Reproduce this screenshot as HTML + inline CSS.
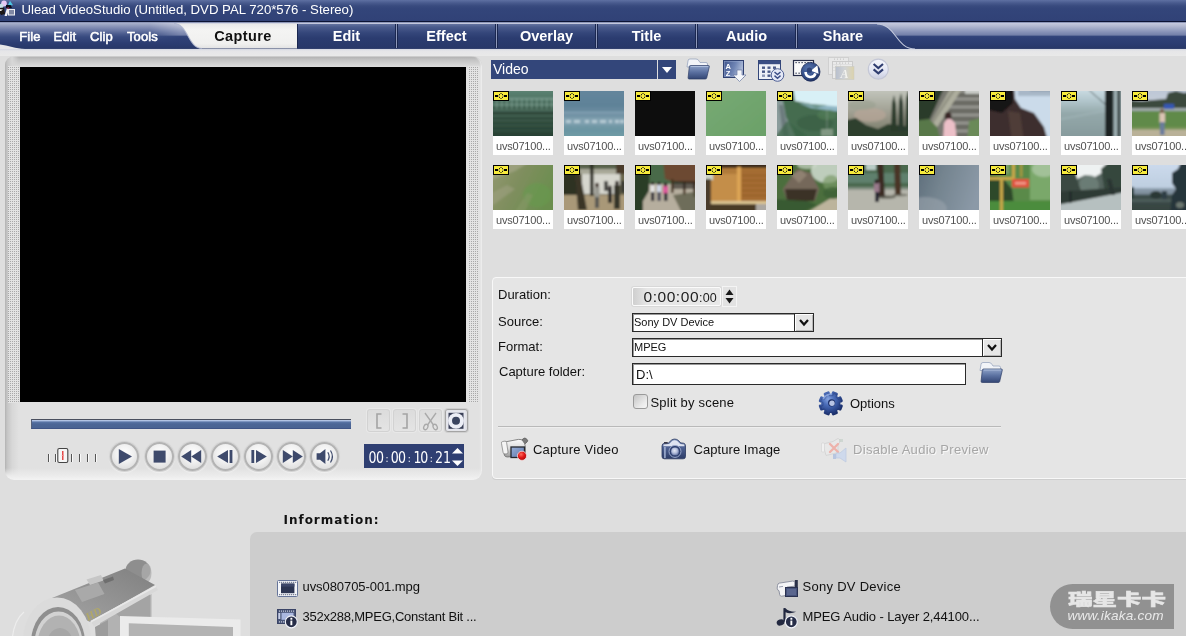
<!DOCTYPE html>
<html>
<head>
<meta charset="utf-8">
<title>Ulead VideoStudio</title>
<style>
html,body{margin:0;padding:0;}
body{width:1186px;height:636px;overflow:hidden;background:#dedede;font-family:"Liberation Sans",sans-serif;font-size:13px;color:#111;position:relative;}
.abs{position:absolute;}
#titlebar{left:0;top:0;width:1186px;height:21px;background:linear-gradient(#5e70a2 0px,#485a8d 3px,#384a7e 6px,#33457a 9px,#314277 20px);}
#titlebar .t{left:21.5px;top:2px;color:#fff;font-size:13.2px;line-height:16px;white-space:nowrap;}
#tline1{left:0;top:21px;width:1186px;height:1px;background:#0d1434;}
#tline2{left:0;top:22px;width:1186px;height:1px;background:#8e97b8;}
#menubar{left:0;top:23px;width:1186px;height:26px;background:linear-gradient(#c6cade 0px,#b3b9d1 3px,#9da6c4 6px,#8792b7 9px,#7783ab 11.5px,#5c6b98 12.5px,#33457b 13.5px,#2f4177 15px,#2b3c71 21px,#283869 25px,#3c4974 26px);}
.menu{top:28.6px;color:#fff;font-size:13px;line-height:16px;white-space:nowrap;-webkit-text-stroke:.55px #fff;letter-spacing:.1px;}
.tab{top:24px;height:24px;width:99px;box-sizing:border-box;border-left:1px solid #1a2750;border-right:1px solid #1a2750;background:linear-gradient(#6473a0 0px,#4a5b8c 3px,#34467a 9px,#2b3c70 14px,#283869 24px);color:#fff;font-weight:bold;font-size:14.5px;line-height:24px;text-align:center;}
.tabsep{top:24px;width:1px;height:24px;background:#8d97ba;}

#band{left:0;top:49px;width:1186px;height:7px;background:linear-gradient(#d4d7e2 0,#e6e6e8 2px,#e9e9e9 7px);}
#pv{left:5px;top:56px;width:476.6px;height:424px;box-sizing:border-box;border-radius:9px 10px 9px 9px;background:linear-gradient(0deg,#f3f3f3 0,#ececec 4px,rgba(225,225,225,0) 12px),linear-gradient(90deg,#b2b2b2 0,#c4c4c4 2px,#d7d7d7 7px,rgba(225,225,225,0) 14px),linear-gradient(#d4d4d4 0,#b6b6b6 1.5px,#c4c4c4 4px,#d6d6d6 9px,#e0e0e0 12px,#e1e1e1 13px,#e1e1e1 100%);box-shadow:inset -2px 0 2px -1px #f0f0f0;}
.dots{top:66px;width:11px;height:337px;background-color:#e3e3e3;background-image:radial-gradient(circle at 0.5px 0.5px,#a8a8a8 0.55px,rgba(168,168,168,0) 0.9px);background-size:2px 2px;}
#video{left:20px;top:67px;width:446px;height:335px;background:#000;}
#scrub{left:31px;top:419px;width:320px;height:10px;box-sizing:border-box;border-top:1px solid #4a4f5e;border-bottom:1px solid #3f5485;border-left:1px solid #55607a;background:linear-gradient(#c5d3ee 0,#9fb3d8 1px,#5a75a6 2px,#4c6696 4px,#4a6392 8px);}
.pbtn{top:409px;width:23px;height:23px;box-sizing:border-box;border-radius:3px;border:1px solid #d2d2d2;background:linear-gradient(#dcdcdc,#e4e4e4);box-shadow:0 0 0 1px #e8e8e8;}
.rbtn{top:442px;width:29px;height:29px;box-sizing:border-box;border-radius:50%;border:2px solid #b3b3b3;background:radial-gradient(circle at 50% 38%,#ffffff 0,#f0f0f0 45%,#d4d4d4 100%);box-shadow:0 0 1px 1px #cfcfcf,0 1px 1px 1px #f4f4f4;}
#tc{left:364px;top:444px;width:100px;height:24px;background:#2f3f72;}
#all{position:absolute;left:0;top:0;width:1186px;height:636px;overflow:hidden;will-change:transform;}
.th{width:60px;height:64px;background:#fff;}
.th svg{display:block;}
.tl{font-size:11px;line-height:15px;color:#505050;padding:3px 0 0 3px;white-space:nowrap;letter-spacing:-.2px;}
#lib{left:491px;top:60px;width:166px;height:19px;background:#33467a;color:#fff;font-size:14px;line-height:19px;}
#libbtn{left:658px;top:60px;width:18px;height:19px;background:#33467a;}
#opt{left:492px;top:277px;width:720px;height:202px;box-sizing:border-box;border:1.5px solid #f8f8f8;border-radius:4px;background:#e5e5e5;box-shadow:0 1px 0 #cecece;}
.lbl{font-size:13px;line-height:15px;white-space:nowrap;color:#111;}
.combo{box-sizing:border-box;border:1px solid #2a2a2a;background:#fff;height:19px;font-size:11px;line-height:17px;padding-left:1px;white-space:nowrap;box-shadow:inset 1px 1px 0 #999;}
.cbtn{box-sizing:border-box;border:1px solid #2a2a2a;border-left:none;background:#e6e6e6;height:19px;width:19px;box-shadow:inset 1px 1px 0 #fff,inset -1px -1px 0 #b8b8b8;}
#dur{left:632px;top:287px;width:89px;height:19px;box-sizing:border-box;border-radius:2px;border:1px solid #fbfbfb;background:linear-gradient(90deg,#cfcfcf 0,#e6e6e6 14px,#e8e8e8 100%);box-shadow:0 0 0 1px #d8d8d8;font-family:"Liberation Sans",sans-serif;font-size:15.5px;line-height:18px;color:#222;white-space:nowrap;}
#infop{left:250px;top:532px;width:950px;height:120px;background:#cdcdcd;border-radius:7px 0 0 0;}
#infot{left:283.6px;top:512.2px;font-family:"DejaVu Sans",sans-serif;font-weight:bold;font-size:12px;line-height:16px;letter-spacing:.95px;color:#111;white-space:nowrap;}
.it{font-size:12.5px;line-height:15px;white-space:nowrap;color:#111;}
#wm{left:1050px;top:584px;width:124px;height:45px;background:#919191;border-radius:23px 0 0 23px;}
#tctxt{left:368.5px;top:449px;height:16px;white-space:nowrap;font-family:"DejaVu Sans",sans-serif;font-weight:400;font-size:12.6px;line-height:16px;color:#fff;transform-origin:0 0;transform:scaleY(1.2);}
#tctxt span{display:inline-block;width:7.4px;text-align:center;}
#tctxt span.r{position:relative;left:.6px;}
#tctxt span.c{font-size:9px;position:relative;top:-1.2px;}
</style>
</head>
<body>
<div id="all">
<div id="titlebar" class="abs"><div class="abs t">Ulead VideoStudio (Untitled, DVD PAL 720*576 - Stereo)</div></div>
<svg class="abs" style="left:0;top:0" width="17" height="18" viewBox="0 0 17 18"><defs><filter id="ib"><feGaussianBlur stdDeviation="0.45"/></filter></defs><g filter="url(#ib)">
<ellipse cx="4" cy="3.6" rx="2.800" ry="3" fill="#e6c8f4"/><ellipse cx="1.500" cy="6" rx="2" ry="2.500" fill="#c8e0e8"/>
<polygon points="8,5 10,0.800 13,5.200" fill="#4cc4e4"/>
<polygon points="6,5 10.500,5 12,8 6,8" fill="#0c0c14"/>
<polygon points="-1,8 4,7.500 5,14 1,15 -1,12" fill="#1a1414"/><polygon points="-1,9 3,9.500 1,11 -1,11" fill="#e8e8e8"/>
<polygon points="4.500,16 7,8 9,9 7,16" fill="#f4f0f4"/><polygon points="6,8 9,7 9.500,10" fill="#7a2a4a"/>
<rect x="8.500" y="9.500" width="6" height="5.500" fill="#8088a4" stroke="#f0f0f4" stroke-width="1"/>
</g></svg>
<div id="tline1" class="abs"></div>
<div id="tline2" class="abs"></div>
<div id="menubar" class="abs"></div>
<div class="abs" style="left:0;top:23px;width:180px;height:26px;background:linear-gradient(#aab2cc 0px,#8e98ba 3px,#6c7aa6 7px,#4a5b8d 11px,#384a7f 14px,#2c3d72 20px,#283869 25px,#3c4974 26px);-webkit-mask-image:linear-gradient(90deg,#000 150px,transparent 180px)"></div>
<div class="abs menu" style="left:19.2px">File</div>
<div class="abs menu" style="left:53.4px">Edit</div>
<div class="abs menu" style="left:90px">Clip</div>
<div class="abs menu" style="left:127px">Tools</div>
<svg class="abs" style="left:0;top:43px" width="26" height="7" viewBox="0 43 26 7"><path d="M0,44.600 C8,45.500 16,48.800 25,49 L0,49 Z" fill="#e6e6e8"/></svg>
<svg class="abs" style="left:160px;top:23px" width="140" height="27" viewBox="160 23 140 27">
<defs><linearGradient id="capg" x1="0" y1="0" x2="0" y2="1"><stop offset="0" stop-color="#e8e8e8"/><stop offset="0.25" stop-color="#f4f4f3"/><stop offset="0.8" stop-color="#f0f0ef"/><stop offset="1" stop-color="#e2e2e2"/></linearGradient></defs>
<path d="M174,23.5 C188,23.5 188,48.6 202,48.6 L297,48.6 L297,23.5 Z" fill="url(#capg)"/>
<path d="M174,23.5 C188,23.5 188,48.6 202,48.6" fill="none" stroke="#aab2cc" stroke-width="1.2" opacity=".8"/>
</svg>
<div class="abs" style="left:200px;top:24px;width:86px;height:24px;line-height:24px;text-align:center;font-weight:bold;font-size:14.5px;color:#111;letter-spacing:.4px">Capture</div>
<div class="abs tab" style="left:297px">Edit</div><div class="abs tabsep" style="left:396px"></div>
<div class="abs tab" style="left:397px">Effect</div><div class="abs tabsep" style="left:496px"></div>
<div class="abs tab" style="left:497px">Overlay</div><div class="abs tabsep" style="left:596px"></div>
<div class="abs tab" style="left:597px">Title</div><div class="abs tabsep" style="left:696px"></div>
<div class="abs tab" style="left:697px">Audio</div><div class="abs tabsep" style="left:796px"></div>
<svg class="abs" style="left:797px;top:23px" width="125" height="27" viewBox="797 23 125 27">
<defs><linearGradient id="shg" x1="0" y1="0" x2="0" y2="1"><stop offset="0" stop-color="#6473a0"/><stop offset="0.14" stop-color="#4a5b8c"/><stop offset="0.4" stop-color="#34467a"/><stop offset="0.6" stop-color="#2b3c70"/><stop offset="1" stop-color="#283869"/></linearGradient></defs>
<path d="M797,24 L877,24 C896,24 896,49 915,49 L797,49 Z" fill="url(#shg)"/>
<path d="M797.5,24 L797.5,48" stroke="#1a2750" stroke-width="1"/>
<path d="M877,24 C896,24 896,49 915,49" fill="none" stroke="#c3c9dd" stroke-width="1.1"/>
</svg>
<div class="abs" style="left:797px;top:24px;width:92px;height:24px;line-height:24px;text-align:center;font-weight:bold;font-size:14.5px;color:#fff">Share</div>

<div id="band" class="abs"></div>
<div id="pv" class="abs"></div>
<div class="abs dots" style="left:8px;background-position:0 1px"></div>
<div class="abs dots" style="left:468px;width:10.5px;background-position:1px 1px"></div>
<div id="video" class="abs"></div>
<div id="scrub" class="abs"></div>
<div class="abs pbtn" style="left:367px"></div>
<div class="abs pbtn" style="left:393px"></div>
<div class="abs pbtn" style="left:419px"></div>
<div class="abs pbtn" style="left:445px;border-color:#a4a4a4;background:#e0e0e4;box-shadow:0 0 0 1px #cfcfcf"></div>
<svg class="abs" style="left:366px;top:408px" width="104" height="26" viewBox="366 408 104 26">
<path d="M381.5,414 l-4.500,0 0,14 4.500,0" fill="none" stroke="#a4a4a4" stroke-width="1.600"/>
<path d="M402.500,414 l4.500,0 0,14 -4.500,0" fill="none" stroke="#a4a4a4" stroke-width="1.600"/>
<g fill="none" stroke="#a9a9a9" stroke-width="1.300"><path d="M425,413 l8.500,12"/><path d="M436,413 l-8.500,12"/><ellipse cx="425.800" cy="427" rx="2" ry="2.800" transform="rotate(25 425.800 427)"/><ellipse cx="435.200" cy="427" rx="2" ry="2.800" transform="rotate(-25 435.200 427)"/></g>
<rect x="446.500" y="410.500" width="19" height="20" fill="#e6e7ee"/>
<rect x="448.500" y="412.800" width="15" height="16" fill="#3a4058"/>
<circle cx="456" cy="420.800" r="7.900" fill="#eceef6"/>
<circle cx="456" cy="420.800" r="4" fill="#3b4560"/>
</svg>

<svg class="abs" style="left:44px;top:446px" width="56" height="20" viewBox="44 446 56 20">
<g stroke="#555" stroke-width="1"><path d="M48.500,454 v8"/><path d="M55.500,454 v8"/><path d="M71.500,454 v8"/><path d="M79.500,454 v8"/><path d="M87.500,454 v8"/><path d="M95.500,454 v8"/></g>
<g stroke="#fff" stroke-width="1" opacity=".8"><path d="M49.500,454 v8"/><path d="M56.500,454 v8"/><path d="M72.500,454 v8"/><path d="M80.500,454 v8"/><path d="M88.500,454 v8"/><path d="M96.500,454 v8"/></g>
<rect x="57.800" y="448.500" width="10" height="14" rx="1.500" fill="#f6f6f6" stroke="#444" stroke-width="1.100"/>
<path d="M62.800,451 v9" stroke="#e02020" stroke-width="1.200"/><path d="M61.800,455.500 h2" stroke="#e88" stroke-width="1"/>
</svg>

<div class="abs rbtn" style="left:110px"></div>
<div class="abs rbtn" style="left:145px"></div>
<div class="abs rbtn" style="left:178px"></div>
<div class="abs rbtn" style="left:211px"></div>
<div class="abs rbtn" style="left:244px"></div>
<div class="abs rbtn" style="left:277px"></div>
<div class="abs rbtn" style="left:310px"></div>
<svg class="abs" style="left:108px;top:440px" width="234" height="34" viewBox="108 440 234 34">
<g fill="#3e4a6c">
<polygon points="118.800,449 132,456.500 118.800,464"/>
<rect x="153.600" y="450.600" width="12" height="12"/>
<polygon points="191.200,450 191.200,463 181.200,456.500"/><polygon points="201.200,450 201.200,463 191.200,456.500"/>
<polygon points="228,450 228,463 217.200,456.500"/><rect x="229.600" y="450" width="2.800" height="13"/>
<rect x="251.400" y="450" width="2.800" height="13"/><polygon points="256,450 256,463 266.800,456.500"/>
<polygon points="282.800,450 282.800,463 292.800,456.500"/><polygon points="292.800,450 292.800,463 302.800,456.500"/>
<polygon points="316.600,453.300 320,453.300 325.400,449 325.400,464 320,459.700 316.600,459.700"/>
</g>
<g fill="none" stroke="#3e4a6c" stroke-width="1.200"><path d="M327.800,452.300 q2.700,4.200 0,8.400"/><path d="M330.500,450.500 q3.800,6 0,12"/></g>
</svg>

<div id="tc" class="abs"></div>
<div class="abs" id="tctxt"><span>0</span><span>0</span><span class="c">:</span><span>0</span><span>0</span><span class="c">:</span><span class="r">1</span><span>0</span><span class="c">:</span><span>2</span><span class="r">1</span></div>
<svg class="abs" style="left:451px;top:446px" width="13" height="22"><polygon points="1,7.500 12,7.500 6.500,2" fill="#fff"/><polygon points="1,14.500 12,14.500 6.500,20" fill="#fff"/></svg>


<div id="lib" class="abs"><span style="padding-left:2px">Video</span></div>
<div id="libbtn" class="abs"><svg width="18" height="19"><polygon points="4,7 14,7 9,13" fill="#fff"/></svg></div>
<svg class="abs" style="left:680px;top:54px" width="220" height="32" viewBox="680 54 220 32">
<defs>
<linearGradient id="fold1" x1="0" y1="0" x2="0" y2="1"><stop offset="0" stop-color="#8ea2c8"/><stop offset="0.5" stop-color="#5a70a0"/><stop offset="1" stop-color="#334674"/></linearGradient>
<linearGradient id="az1" x1="0" y1="0" x2="1" y2="0.3"><stop offset="0" stop-color="#3f548a"/><stop offset="0.6" stop-color="#6f84b4"/><stop offset="1" stop-color="#aebcd8"/></linearGradient>
<radialGradient id="bc1" cx="0.4" cy="0.35" r="0.7"><stop offset="0" stop-color="#5b78b0"/><stop offset="0.6" stop-color="#35508a"/><stop offset="1" stop-color="#1f3060"/></radialGradient>
<linearGradient id="chv1" x1="0" y1="0" x2="0" y2="1"><stop offset="0" stop-color="#f6f7fc"/><stop offset="0.6" stop-color="#e2e5f2"/><stop offset="1" stop-color="#c9cde0"/></linearGradient>
<linearGradient id="dis1" x1="0" y1="0" x2="1" y2="0"><stop offset="0" stop-color="#b4bccc"/><stop offset="0.5" stop-color="#cfd2d4"/><stop offset="1" stop-color="#dcd2a8"/></linearGradient>
</defs>
<!-- folder -->
<path d="M688,61 q0,-2 2,-2 l6,0 q2,0 3,2 l1,1.5 l6,0 q1.5,0 1.5,1.5 l0,3 l-20.5,0 z" fill="#f2f4f8" stroke="#8090b0" stroke-width=".6"/>
<path d="M690.5,65.5 l18,0 q1,0 .8,1.2 l-2.6,11.3 q-.3,1 -1.5,1 l-16,0 q-1.3,0 -1.1,-1.3 l1.2,-11 q.2,-1.2 1.2,-1.2 z" fill="url(#fold1)" stroke="#2c3c66" stroke-width=".7"/>
<path d="M691,66.5 l17,0" stroke="#b8c6e2" stroke-width=".8"/>
<!-- AZ sort -->
<rect x="723.5" y="60.5" width="20" height="17" fill="url(#az1)" stroke="#2f4070" stroke-width="1"/>
<rect x="724.5" y="61.5" width="18" height="15" fill="none" stroke="#9fb0d4" stroke-width=".6" opacity=".7"/>
<text x="725.6" y="68.6" font-family="Liberation Sans, sans-serif" font-weight="bold" font-size="7.5" fill="#fff">A</text>
<text x="725.8" y="75.6" font-family="Liberation Sans, sans-serif" font-weight="bold" font-size="7.5" fill="#fff">Z</text>
<path d="M737,70 l5,0 0,5 4,0 -6.5,6.5 -6.5,-6.5 4,0 z" fill="#f4f6fa" stroke="#6a7aa0" stroke-width=".7"/>
<!-- grid -->
<rect x="758.5" y="60.5" width="22" height="19" fill="#eef1f7" stroke="#34477a" stroke-width="1"/>
<rect x="759" y="61" width="21" height="3.2" fill="#3a4e84"/>
<g fill="#4a5a88"><rect x="762" y="66.5" width="3" height="2.4"/><rect x="767.5" y="66.5" width="3" height="2.4"/><rect x="773" y="66.5" width="3" height="2.4"/><rect x="762" y="70.5" width="3" height="2.4"/><rect x="767.5" y="70.5" width="3" height="2.4"/><rect x="762" y="74.5" width="3" height="2.4" opacity=".6"/><rect x="767.5" y="74.5" width="3" height="2.4"/></g>
<circle cx="777.5" cy="75" r="6.3" fill="#e4e8f6" stroke="#4f6094" stroke-width="1"/>
<path d="M774.5,72 l3,2.6 3,-2.6 M774.5,75.6 l3,2.6 3,-2.6" fill="none" stroke="#3a4c86" stroke-width="1.4"/>
<!-- film + arrow -->
<rect x="793.5" y="60.5" width="20" height="15" fill="#fafafa" stroke="#262c48" stroke-width="1.2"/>
<g fill="#222a44"><rect x="795.5" y="62" width="1.2" height="1.2"/><rect x="798.5" y="62" width="1.2" height="1.2"/><rect x="801.5" y="62" width="1.2" height="1.2"/><rect x="804.5" y="62" width="1.2" height="1.2"/><rect x="807.5" y="62" width="1.2" height="1.2"/><rect x="810.5" y="62" width="1.2" height="1.2"/><rect x="795.5" y="72.6" width="1.2" height="1.2"/><rect x="798.5" y="72.6" width="1.2" height="1.2"/></g>
<circle cx="810.6" cy="71.8" r="9.4" fill="url(#bc1)" stroke="#1d2c58" stroke-width=".8"/>
<path d="M805.6,72 a5,5 0 0 0 9.8,1.4" fill="none" stroke="#fff" stroke-width="2.6"/>
<path d="M811,70.8 l6.400,-5.600 1.200,8.600 z" fill="#fff"/>
<circle cx="809.4" cy="70.2" r="2.6" fill="#2b3f72" opacity=".9"/>
<!-- disabled -->
<g opacity=".9"><rect x="828.5" y="57.5" width="20" height="17" fill="#e9e9e9" stroke="#cfcfcf"/><rect x="832.5" y="61.5" width="20" height="17" fill="#ececec" stroke="#c8c8c8"/>
<path d="M833,64.5 h19 M833,67.5 h19 M833,70.5 h19 M836.5,62 v16 M840.5,62 v16" stroke="#d6d6d6" stroke-width=".6"/>
<g fill="#bdbdbd"><rect x="834" y="58.6" width="1" height="1"/><rect x="837" y="58.6" width="1" height="1"/><rect x="840" y="58.6" width="1" height="1"/><rect x="843" y="58.6" width="1" height="1"/><rect x="836" y="62.6" width="1" height="1"/><rect x="839" y="62.6" width="1" height="1"/><rect x="842" y="62.6" width="1" height="1"/><rect x="845" y="62.6" width="1" height="1"/><rect x="848" y="62.6" width="1" height="1"/></g>
<rect x="835.5" y="66.5" width="18.5" height="13" fill="url(#dis1)" stroke="#c8c8c0" stroke-width=".6"/>
<text x="840.5" y="78" font-family="Liberation Serif, serif" font-style="italic" font-weight="bold" font-size="12" fill="#f4f4f0">A</text></g>
<!-- chevrons -->
<circle cx="878.3" cy="69.2" r="10" fill="url(#chv1)" stroke="#c4c7d6" stroke-width="1.2"/>
<path d="M873.6,64 l4.7,4 4.7,-4 M873.6,69.4 l4.7,4 4.7,-4" fill="none" stroke="#2f3d70" stroke-width="2.1"/>
</svg>
<svg width="0" height="0" style="position:absolute"><defs><filter id="tb" x="-10%" y="-10%" width="120%" height="120%"><feGaussianBlur stdDeviation="0.8"/></filter></defs></svg>
<div class="abs th" style="left:493px;top:91px"><svg width="60" height="45" viewBox="0 0 60 45"><g filter="url(#tb)"><linearGradient id="g1" x1="0" y1="0" x2="0" y2="1"><stop offset="0" stop-color="#648a7a"/><stop offset="0.2" stop-color="#527868"/><stop offset="0.42" stop-color="#3c5c4c"/><stop offset="0.6" stop-color="#2f4a3c"/><stop offset="1" stop-color="#264034"/></linearGradient><rect x="-5" y="-5" width="70" height="55" fill="url(#g1)"/><rect x="-5" y="7" width="70" height="1.4" fill="#a0c0b2" opacity="0.55"/><rect x="-5" y="13" width="70" height="1.4" fill="#8cb09f" opacity="0.5"/><rect x="-5" y="19" width="70" height="1.4" fill="#7a9e8c" opacity="0.45"/><rect x="-5" y="24" width="70" height="1.4" fill="#5f8270" opacity="0.5"/><rect x="-5" y="29" width="70" height="1.4" fill="#55786a" opacity="0.45"/><rect x="-5" y="34" width="70" height="1.4" fill="#4f7262" opacity="0.4"/><rect x="-5" y="39" width="70" height="1.4" fill="#4a6c5c" opacity="0.35"/><rect x="3" y="8" width="1.5" height="10" fill="#b4d0c4" opacity="0.35"/><rect x="8" y="8" width="1.5" height="10" fill="#b4d0c4" opacity="0.35"/><rect x="13" y="8" width="1.5" height="10" fill="#b4d0c4" opacity="0.35"/><rect x="18" y="8" width="1.5" height="10" fill="#b4d0c4" opacity="0.35"/><rect x="23" y="8" width="1.5" height="10" fill="#b4d0c4" opacity="0.35"/><rect x="28" y="8" width="1.5" height="10" fill="#b4d0c4" opacity="0.35"/><rect x="33" y="8" width="1.5" height="10" fill="#b4d0c4" opacity="0.35"/><rect x="38" y="8" width="1.5" height="10" fill="#b4d0c4" opacity="0.35"/><rect x="43" y="8" width="1.5" height="10" fill="#b4d0c4" opacity="0.35"/><rect x="48" y="8" width="1.5" height="10" fill="#b4d0c4" opacity="0.35"/><rect x="53" y="8" width="1.5" height="10" fill="#b4d0c4" opacity="0.35"/><rect x="58" y="8" width="1.5" height="10" fill="#b4d0c4" opacity="0.35"/><rect x="-5" y="20" width="70" height="4" fill="#24382c" opacity="0.45"/></g><g><rect x="0.5" y="0.5" width="15" height="9" fill="#f6ea3c" stroke="#000"/><rect x="2" y="4" width="3" height="2" fill="#000"/><rect x="11" y="4" width="3" height="2" fill="#000"/><rect x="7.5" y="2" width="1" height="1" fill="#000"/><rect x="7.5" y="7" width="1" height="1" fill="#000"/><rect x="6" y="3" width="1" height="1" fill="#222"/><rect x="9" y="3" width="1" height="1" fill="#222"/><rect x="6" y="6" width="1" height="1" fill="#222"/><rect x="9" y="6" width="1" height="1" fill="#222"/><rect x="5.5" y="4.5" width="1" height="1" fill="#333"/><rect x="9.5" y="4.5" width="1" height="1" fill="#333"/></g></svg><div class="tl">uvs07100...</div></div>
<div class="abs th" style="left:564px;top:91px"><svg width="60" height="45" viewBox="0 0 60 45"><g filter="url(#tb)"><linearGradient id="g2" x1="0" y1="0" x2="0" y2="1"><stop offset="0" stop-color="#66879e"/><stop offset="0.35" stop-color="#5f8298"/><stop offset="0.5" stop-color="#6e8fa2"/><stop offset="0.62" stop-color="#7d9cac"/><stop offset="0.8" stop-color="#6a95a2"/><stop offset="1" stop-color="#73a0a8"/></linearGradient><rect x="-5" y="-5" width="70" height="55" fill="url(#g2)"/><rect x="-5" y="21" width="70" height="1.2" fill="#9ab4c4" opacity="0.7"/><rect x="2" y="29" width="5" height="3" fill="#e4eef2" opacity="0.75"/><rect x="10" y="29" width="6" height="3" fill="#e4eef2" opacity="0.75"/><rect x="21" y="29" width="4" height="3" fill="#e4eef2" opacity="0.75"/><rect x="28" y="29" width="5" height="3" fill="#e4eef2" opacity="0.75"/><rect x="36" y="29" width="6" height="3" fill="#e4eef2" opacity="0.75"/><rect x="45" y="29" width="3" height="3" fill="#e4eef2" opacity="0.75"/><rect x="51" y="29" width="4" height="3" fill="#e4eef2" opacity="0.75"/><rect x="56" y="29" width="4" height="3" fill="#e4eef2" opacity="0.75"/><rect x="-5" y="27" width="70" height="7" fill="#8fb0bc" opacity="0.35"/></g><g><rect x="0.5" y="0.5" width="15" height="9" fill="#f6ea3c" stroke="#000"/><rect x="2" y="4" width="3" height="2" fill="#000"/><rect x="11" y="4" width="3" height="2" fill="#000"/><rect x="7.5" y="2" width="1" height="1" fill="#000"/><rect x="7.5" y="7" width="1" height="1" fill="#000"/><rect x="6" y="3" width="1" height="1" fill="#222"/><rect x="9" y="3" width="1" height="1" fill="#222"/><rect x="6" y="6" width="1" height="1" fill="#222"/><rect x="9" y="6" width="1" height="1" fill="#222"/><rect x="5.5" y="4.5" width="1" height="1" fill="#333"/><rect x="9.5" y="4.5" width="1" height="1" fill="#333"/></g></svg><div class="tl">uvs07100...</div></div>
<div class="abs th" style="left:635px;top:91px"><svg width="60" height="45" viewBox="0 0 60 45"><g filter="url(#tb)"><rect x="-5" y="-5" width="70" height="55" fill="#0b0c0f"/><ellipse cx="45" cy="15" rx="18" ry="14" fill="#101214" opacity="0.5"/></g><g><rect x="0.5" y="0.5" width="15" height="9" fill="#f6ea3c" stroke="#000"/><rect x="2" y="4" width="3" height="2" fill="#000"/><rect x="11" y="4" width="3" height="2" fill="#000"/><rect x="7.5" y="2" width="1" height="1" fill="#000"/><rect x="7.5" y="7" width="1" height="1" fill="#000"/><rect x="6" y="3" width="1" height="1" fill="#222"/><rect x="9" y="3" width="1" height="1" fill="#222"/><rect x="6" y="6" width="1" height="1" fill="#222"/><rect x="9" y="6" width="1" height="1" fill="#222"/><rect x="5.5" y="4.5" width="1" height="1" fill="#333"/><rect x="9.5" y="4.5" width="1" height="1" fill="#333"/></g></svg><div class="tl">uvs07100...</div></div>
<div class="abs th" style="left:706px;top:91px"><svg width="60" height="45" viewBox="0 0 60 45"><g filter="url(#tb)"><linearGradient id="g4" x1="0" y1="0" x2="1" y2="1"><stop offset="0" stop-color="#78aa74"/><stop offset="1" stop-color="#6aa068"/></linearGradient><rect x="-5" y="-5" width="70" height="55" fill="url(#g4)"/></g><g><rect x="0.5" y="0.5" width="15" height="9" fill="#f6ea3c" stroke="#000"/><rect x="2" y="4" width="3" height="2" fill="#000"/><rect x="11" y="4" width="3" height="2" fill="#000"/><rect x="7.5" y="2" width="1" height="1" fill="#000"/><rect x="7.5" y="7" width="1" height="1" fill="#000"/><rect x="6" y="3" width="1" height="1" fill="#222"/><rect x="9" y="3" width="1" height="1" fill="#222"/><rect x="6" y="6" width="1" height="1" fill="#222"/><rect x="9" y="6" width="1" height="1" fill="#222"/><rect x="5.5" y="4.5" width="1" height="1" fill="#333"/><rect x="9.5" y="4.5" width="1" height="1" fill="#333"/></g></svg><div class="tl">uvs07100...</div></div>
<div class="abs th" style="left:777px;top:91px"><svg width="60" height="45" viewBox="0 0 60 45"><g filter="url(#tb)"><rect x="-5" y="-5" width="70" height="55" fill="#456c50"/><polygon points="16,-5 65,-5 65,17 34,13 18,10" fill="#d8f0f6"/><polygon points="22,12 65,16 65,21 34,17" fill="#8fb6c4"/><polygon points="26,13 50,14 40,17" fill="#5f8a78" opacity="0.8"/><polygon points="-5,8 6,10 9,26 16,40 20,50 -5,50" fill="#8b9c9c"/><polygon points="2,14 6,14 12,45 6,45" fill="#5f6c70" opacity="0.7"/><ellipse cx="38" cy="32" rx="18" ry="8" fill="#3a6044" opacity="0.8"/><ellipse cx="50" cy="24" rx="10" ry="5" fill="#527c56" opacity="0.7"/><rect x="44" y="38" width="12" height="7" fill="#a9b4a4" opacity="0.6"/><line x1="50" y1="18" x2="50" y2="40" stroke="#9aa8a0" stroke-width="0.8" opacity="0.7"/><polygon points="10,30 30,45 -5,50" fill="#3c6446" opacity="0.7"/></g><g><rect x="0.5" y="0.5" width="15" height="9" fill="#f6ea3c" stroke="#000"/><rect x="2" y="4" width="3" height="2" fill="#000"/><rect x="11" y="4" width="3" height="2" fill="#000"/><rect x="7.5" y="2" width="1" height="1" fill="#000"/><rect x="7.5" y="7" width="1" height="1" fill="#000"/><rect x="6" y="3" width="1" height="1" fill="#222"/><rect x="9" y="3" width="1" height="1" fill="#222"/><rect x="6" y="6" width="1" height="1" fill="#222"/><rect x="9" y="6" width="1" height="1" fill="#222"/><rect x="5.5" y="4.5" width="1" height="1" fill="#333"/><rect x="9.5" y="4.5" width="1" height="1" fill="#333"/></g></svg><div class="tl">uvs07100...</div></div>
<div class="abs th" style="left:848px;top:91px"><svg width="60" height="45" viewBox="0 0 60 45"><g filter="url(#tb)"><linearGradient id="g6" x1="0" y1="0" x2="0" y2="1"><stop offset="0" stop-color="#c9ccc4"/><stop offset="0.3" stop-color="#aeb0a4"/><stop offset="0.55" stop-color="#9a988a"/><stop offset="1" stop-color="#6a705c"/></linearGradient><rect x="-5" y="-5" width="70" height="55" fill="url(#g6)"/><ellipse cx="22" cy="24" rx="16" ry="7" fill="#b8a698" opacity="0.7"/><ellipse cx="14" cy="14" rx="14" ry="5" fill="#9aa090" opacity="0.6"/><polygon points="-5,30 8,27 18,34 30,38 40,33 65,36 65,50 -5,50" fill="#2d3f2e"/><polygon points="43,40 44,12 46,4 48,14 49,40" fill="#2a3a2c"/><polygon points="50,40 51,10 53,2 55,12 56,40" fill="#2b3b2d"/><polygon points="57,40 58,8 60,0 65,0 65,40" fill="#2c3c2e"/></g><g><rect x="0.5" y="0.5" width="15" height="9" fill="#f6ea3c" stroke="#000"/><rect x="2" y="4" width="3" height="2" fill="#000"/><rect x="11" y="4" width="3" height="2" fill="#000"/><rect x="7.5" y="2" width="1" height="1" fill="#000"/><rect x="7.5" y="7" width="1" height="1" fill="#000"/><rect x="6" y="3" width="1" height="1" fill="#222"/><rect x="9" y="3" width="1" height="1" fill="#222"/><rect x="6" y="6" width="1" height="1" fill="#222"/><rect x="9" y="6" width="1" height="1" fill="#222"/><rect x="5.5" y="4.5" width="1" height="1" fill="#333"/><rect x="9.5" y="4.5" width="1" height="1" fill="#333"/></g></svg><div class="tl">uvs07100...</div></div>
<div class="abs th" style="left:919px;top:91px"><svg width="60" height="45" viewBox="0 0 60 45"><g filter="url(#tb)"><rect x="-5" y="-5" width="70" height="55" fill="#77776f"/><polygon points="-5,-5 26,-5 20,8 10,30 -5,34" fill="#2b3a29"/><rect x="34" y="-1" width="40" height="2" fill="#9c9c98" opacity="0.9"/><rect x="33" y="3" width="40" height="2" fill="#5f5f5a" opacity="0.9"/><rect x="32" y="7" width="40" height="2" fill="#9c9c98" opacity="0.9"/><rect x="31" y="11" width="40" height="2" fill="#5f5f5a" opacity="0.9"/><rect x="30" y="15" width="40" height="2" fill="#9c9c98" opacity="0.9"/><rect x="29" y="19" width="40" height="2" fill="#5f5f5a" opacity="0.9"/><rect x="28" y="23" width="40" height="2" fill="#9c9c98" opacity="0.9"/><rect x="27" y="27" width="40" height="2" fill="#5f5f5a" opacity="0.9"/><rect x="26" y="31" width="40" height="2" fill="#9c9c98" opacity="0.9"/><rect x="26" y="35" width="40" height="2" fill="#5f5f5a" opacity="0.9"/><rect x="26" y="39" width="40" height="2" fill="#9c9c98" opacity="0.9"/><rect x="26" y="43" width="40" height="2" fill="#5f5f5a" opacity="0.9"/><polygon points="33,-5 45,-5 17,38 8,38" fill="#aeae9e"/><polygon points="36,-5 39,-5 12,36 10,34" fill="#8a8a7c" opacity="0.8"/><polygon points="-5,30 10,28 18,36 22,50 -5,50" fill="#58784a"/><polygon points="50,30 65,26 65,50 48,50" fill="#6a8a58"/><rect x="46" y="-5" width="20" height="8" fill="#d8dcd8" opacity="0.8"/><ellipse cx="29" cy="25" rx="3.5" ry="4" fill="#3a2826"/><polygon points="24,50 25,32 28,28 32,28 36,32 38,50" fill="#ecc0c8"/></g><g><rect x="0.5" y="0.5" width="15" height="9" fill="#f6ea3c" stroke="#000"/><rect x="2" y="4" width="3" height="2" fill="#000"/><rect x="11" y="4" width="3" height="2" fill="#000"/><rect x="7.5" y="2" width="1" height="1" fill="#000"/><rect x="7.5" y="7" width="1" height="1" fill="#000"/><rect x="6" y="3" width="1" height="1" fill="#222"/><rect x="9" y="3" width="1" height="1" fill="#222"/><rect x="6" y="6" width="1" height="1" fill="#222"/><rect x="9" y="6" width="1" height="1" fill="#222"/><rect x="5.5" y="4.5" width="1" height="1" fill="#333"/><rect x="9.5" y="4.5" width="1" height="1" fill="#333"/></g></svg><div class="tl">uvs07100...</div></div>
<div class="abs th" style="left:990px;top:91px"><svg width="60" height="45" viewBox="0 0 60 45"><g filter="url(#tb)"><rect x="-5" y="-5" width="70" height="55" fill="#cbdbea"/><rect x="28" y="-5" width="40" height="10" fill="#98a8b8" opacity="0.7"/><rect x="40" y="-5" width="30" height="5" fill="#6a7a88" opacity="0.6"/><polygon points="-5,-5 24,-5 25,8 31,17 44,22 54,36 58,50 -5,50" fill="#3c2e2e"/><polygon points="-5,-5 23,-5 23,12 12,22 -5,18" fill="#181214"/><polygon points="18,20 30,22 34,50 22,50" fill="#55403c" opacity="0.8"/></g><g><rect x="0.5" y="0.5" width="15" height="9" fill="#f6ea3c" stroke="#000"/><rect x="2" y="4" width="3" height="2" fill="#000"/><rect x="11" y="4" width="3" height="2" fill="#000"/><rect x="7.5" y="2" width="1" height="1" fill="#000"/><rect x="7.5" y="7" width="1" height="1" fill="#000"/><rect x="6" y="3" width="1" height="1" fill="#222"/><rect x="9" y="3" width="1" height="1" fill="#222"/><rect x="6" y="6" width="1" height="1" fill="#222"/><rect x="9" y="6" width="1" height="1" fill="#222"/><rect x="5.5" y="4.5" width="1" height="1" fill="#333"/><rect x="9.5" y="4.5" width="1" height="1" fill="#333"/></g></svg><div class="tl">uvs07100...</div></div>
<div class="abs th" style="left:1061px;top:91px"><svg width="60" height="45" viewBox="0 0 60 45"><g filter="url(#tb)"><linearGradient id="g9" x1="0" y1="0" x2="0" y2="1"><stop offset="0" stop-color="#d3e3ea"/><stop offset="0.25" stop-color="#b4c8ce"/><stop offset="0.5" stop-color="#94a8aa"/><stop offset="1" stop-color="#84989a"/></linearGradient><rect x="-5" y="-5" width="70" height="55" fill="url(#g9)"/><line x1="-5" y1="29" x2="44" y2="20" stroke="#a9bcc0" stroke-width="1.2" opacity="0.7"/><line x1="28" y1="-1" x2="45" y2="14" stroke="#2a3434" stroke-width="0.8"/><rect x="52" y="-5" width="5" height="55" fill="#9fb0b2"/><rect x="44" y="-5" width="8.5" height="55" fill="#1b2323"/><rect x="56.5" y="-5" width="3" height="55" fill="#263030"/><rect x="59.5" y="-5" width="6" height="55" fill="#9aacae"/></g><g><rect x="0.5" y="0.5" width="15" height="9" fill="#f6ea3c" stroke="#000"/><rect x="2" y="4" width="3" height="2" fill="#000"/><rect x="11" y="4" width="3" height="2" fill="#000"/><rect x="7.5" y="2" width="1" height="1" fill="#000"/><rect x="7.5" y="7" width="1" height="1" fill="#000"/><rect x="6" y="3" width="1" height="1" fill="#222"/><rect x="9" y="3" width="1" height="1" fill="#222"/><rect x="6" y="6" width="1" height="1" fill="#222"/><rect x="9" y="6" width="1" height="1" fill="#222"/><rect x="5.5" y="4.5" width="1" height="1" fill="#333"/><rect x="9.5" y="4.5" width="1" height="1" fill="#333"/></g></svg><div class="tl">uvs07100...</div></div>
<div class="abs th" style="left:1132px;top:91px"><svg width="60" height="45" viewBox="0 0 60 45"><g filter="url(#tb)"><linearGradient id="g10" x1="0" y1="0" x2="0" y2="1"><stop offset="0" stop-color="#bcc6d6"/><stop offset="0.3" stop-color="#c4ccd8"/><stop offset="1" stop-color="#c4ccd8"/></linearGradient><rect x="-5" y="-5" width="70" height="55" fill="url(#g10)"/><polygon points="-5,9 10,10 22,9 34,8 36,2 44,0 52,2 65,0 65,19 -5,19" fill="#3a4a3c"/><rect x="-5" y="17" width="70" height="3.5" fill="#9fa8a8"/><rect x="32" y="13" width="10" height="5" fill="#3558b4"/><rect x="-5" y="20" width="70" height="19" fill="#608a4a"/><rect x="-5" y="36" width="70" height="3" fill="#7a9458" opacity="0.8"/><rect x="-5" y="38.5" width="70" height="12" fill="#b9b198"/><rect x="27.5" y="22" width="5.5" height="10" fill="#dcc4b4"/><ellipse cx="30" cy="20" rx="2" ry="2.2" fill="#7a5a4a"/><rect x="28" y="31" width="4.5" height="13" fill="#6a7c9c"/></g><g><rect x="0.5" y="0.5" width="15" height="9" fill="#f6ea3c" stroke="#000"/><rect x="2" y="4" width="3" height="2" fill="#000"/><rect x="11" y="4" width="3" height="2" fill="#000"/><rect x="7.5" y="2" width="1" height="1" fill="#000"/><rect x="7.5" y="7" width="1" height="1" fill="#000"/><rect x="6" y="3" width="1" height="1" fill="#222"/><rect x="9" y="3" width="1" height="1" fill="#222"/><rect x="6" y="6" width="1" height="1" fill="#222"/><rect x="9" y="6" width="1" height="1" fill="#222"/><rect x="5.5" y="4.5" width="1" height="1" fill="#333"/><rect x="9.5" y="4.5" width="1" height="1" fill="#333"/></g></svg><div class="tl">uvs07100...</div></div>
<div class="abs th" style="left:493px;top:165px"><svg width="60" height="45" viewBox="0 0 60 45"><g filter="url(#tb)"><linearGradient id="g11" x1="0" y1="0" x2="1" y2="0.4"><stop offset="0" stop-color="#969a74"/><stop offset="0.5" stop-color="#7f8e5e"/><stop offset="1" stop-color="#6a8e4e"/></linearGradient><rect x="-5" y="-5" width="70" height="55" fill="url(#g11)"/><polygon points="-5,16 22,6 40,-5 20,-5 -5,6" fill="#a4a688" opacity="0.7"/><polygon points="-5,30 14,20 22,24 -5,44" fill="#a0a284" opacity="0.55"/><ellipse cx="44" cy="30" rx="14" ry="12" fill="#67994e" opacity="0.6"/><polygon points="20,50 34,28 40,30 30,50" fill="#8a9a6a" opacity="0.5"/></g><g><rect x="0.5" y="0.5" width="15" height="9" fill="#f6ea3c" stroke="#000"/><rect x="2" y="4" width="3" height="2" fill="#000"/><rect x="11" y="4" width="3" height="2" fill="#000"/><rect x="7.5" y="2" width="1" height="1" fill="#000"/><rect x="7.5" y="7" width="1" height="1" fill="#000"/><rect x="6" y="3" width="1" height="1" fill="#222"/><rect x="9" y="3" width="1" height="1" fill="#222"/><rect x="6" y="6" width="1" height="1" fill="#222"/><rect x="9" y="6" width="1" height="1" fill="#222"/><rect x="5.5" y="4.5" width="1" height="1" fill="#333"/><rect x="9.5" y="4.5" width="1" height="1" fill="#333"/></g></svg><div class="tl">uvs07100...</div></div>
<div class="abs th" style="left:564px;top:165px"><svg width="60" height="45" viewBox="0 0 60 45"><g filter="url(#tb)"><rect x="-5" y="-5" width="70" height="55" fill="#6c6850"/><rect x="18" y="7" width="38" height="22" fill="#d6d6ce"/><rect x="16" y="4" width="44" height="5" fill="#a8a898"/><rect x="-5" y="-5" width="20" height="55" fill="#2e3324"/><rect x="14" y="-5" width="40" height="9" fill="#55604a" opacity="0.8"/><rect x="-5" y="30" width="70" height="20" fill="#a99878"/><polygon points="11,8 16,8 23,45 14,45" fill="#3a3528"/><rect x="26" y="-5" width="3.5" height="36" fill="#2a2a20"/><rect x="52" y="-5" width="13" height="14" fill="#4a3a2a"/><rect x="40" y="16" width="4" height="10" fill="#4a4a44"/><rect x="57" y="16" width="4" height="12" fill="#3a3a34"/><rect x="30.5" y="22" width="5" height="11" fill="#9a9a92"/><ellipse cx="33" cy="20" rx="2" ry="2.2" fill="#3a2a24"/><rect x="31" y="32" width="4" height="11" fill="#5a5a54"/><rect x="44" y="24" width="4" height="14" fill="#2a2a2c"/><ellipse cx="46" cy="22.5" rx="1.8" ry="2" fill="#2a2220"/><rect x="50" y="20" width="6" height="24" fill="#34342c"/><ellipse cx="53" cy="18" rx="2" ry="2.3" fill="#2a2220"/></g><g><rect x="0.5" y="0.5" width="15" height="9" fill="#f6ea3c" stroke="#000"/><rect x="2" y="4" width="3" height="2" fill="#000"/><rect x="11" y="4" width="3" height="2" fill="#000"/><rect x="7.5" y="2" width="1" height="1" fill="#000"/><rect x="7.5" y="7" width="1" height="1" fill="#000"/><rect x="6" y="3" width="1" height="1" fill="#222"/><rect x="9" y="3" width="1" height="1" fill="#222"/><rect x="6" y="6" width="1" height="1" fill="#222"/><rect x="9" y="6" width="1" height="1" fill="#222"/><rect x="5.5" y="4.5" width="1" height="1" fill="#333"/><rect x="9.5" y="4.5" width="1" height="1" fill="#333"/></g></svg><div class="tl">uvs07100...</div></div>
<div class="abs th" style="left:635px;top:165px"><svg width="60" height="45" viewBox="0 0 60 45"><g filter="url(#tb)"><rect x="-5" y="-5" width="70" height="55" fill="#b6ae9e"/><rect x="-5" y="-5" width="70" height="24" fill="#4a6a48"/><polygon points="-5,-5 15,-5 14,26 8,36 8,50 -5,50" fill="#2c3c28"/><polygon points="28,-5 65,-5 65,20 36,16 30,14" fill="#6c4a30"/><rect x="36" y="14" width="2.5" height="14" fill="#4a3424"/><rect x="48" y="16" width="2.5" height="14" fill="#4a3424"/><rect x="58" y="16" width="3" height="16" fill="#4a3424"/><rect x="38" y="16" width="22" height="8" fill="#2a2420" opacity="0.6"/><polygon points="38,30 65,26 65,50 48,50" fill="#5c5c48" opacity="0.8"/><rect x="15.5" y="20" width="4" height="7" fill="#e4e4e4"/><rect x="16" y="27" width="3.2" height="9" fill="#2a2a34"/><ellipse cx="17.5" cy="18.5" rx="1.6" ry="1.8" fill="#2a2220"/><rect x="22" y="20" width="4" height="7" fill="#d0d8e8"/><rect x="22.5" y="27" width="3.2" height="9" fill="#4a4a5a"/><ellipse cx="24" cy="18.5" rx="1.6" ry="1.8" fill="#2a2220"/><rect x="28" y="21" width="5" height="8" fill="#dc5a9c"/><rect x="29" y="28" width="3.4" height="8" fill="#2a2a34"/><ellipse cx="30.5" cy="19.5" rx="1.7" ry="1.9" fill="#2a2220"/></g><g><rect x="0.5" y="0.5" width="15" height="9" fill="#f6ea3c" stroke="#000"/><rect x="2" y="4" width="3" height="2" fill="#000"/><rect x="11" y="4" width="3" height="2" fill="#000"/><rect x="7.5" y="2" width="1" height="1" fill="#000"/><rect x="7.5" y="7" width="1" height="1" fill="#000"/><rect x="6" y="3" width="1" height="1" fill="#222"/><rect x="9" y="3" width="1" height="1" fill="#222"/><rect x="6" y="6" width="1" height="1" fill="#222"/><rect x="9" y="6" width="1" height="1" fill="#222"/><rect x="5.5" y="4.5" width="1" height="1" fill="#333"/><rect x="9.5" y="4.5" width="1" height="1" fill="#333"/></g></svg><div class="tl">uvs07100...</div></div>
<div class="abs th" style="left:706px;top:165px"><svg width="60" height="45" viewBox="0 0 60 45"><g filter="url(#tb)"><rect x="-5" y="-5" width="70" height="55" fill="#b07a3a"/><rect x="35" y="4" width="30" height="34" fill="#a46c30"/><rect x="36" y="10" width="30" height="0.8" fill="#7a4c20" opacity="0.6"/><rect x="36" y="15" width="30" height="0.8" fill="#7a4c20" opacity="0.6"/><rect x="36" y="20" width="30" height="0.8" fill="#7a4c20" opacity="0.6"/><rect x="36" y="25" width="30" height="0.8" fill="#7a4c20" opacity="0.6"/><rect x="36" y="30" width="30" height="0.8" fill="#7a4c20" opacity="0.6"/><rect x="5" y="9" width="27" height="28" fill="#c48e48"/><rect x="-5" y="-5" width="70" height="8" fill="#3a2a1a"/><rect x="-5" y="3" width="12" height="12" fill="#c9d2c6"/><rect x="-5" y="14" width="10" height="36" fill="#4a3a2a"/><rect x="31" y="2" width="4" height="48" fill="#dca454"/><rect x="5" y="36" width="60" height="3" fill="#dcc492"/><rect x="5" y="39" width="60" height="11" fill="#4a3a28"/><rect x="50" y="39" width="15" height="11" fill="#c4c4c0" opacity="0.8"/></g><g><rect x="0.5" y="0.5" width="15" height="9" fill="#f6ea3c" stroke="#000"/><rect x="2" y="4" width="3" height="2" fill="#000"/><rect x="11" y="4" width="3" height="2" fill="#000"/><rect x="7.5" y="2" width="1" height="1" fill="#000"/><rect x="7.5" y="7" width="1" height="1" fill="#000"/><rect x="6" y="3" width="1" height="1" fill="#222"/><rect x="9" y="3" width="1" height="1" fill="#222"/><rect x="6" y="6" width="1" height="1" fill="#222"/><rect x="9" y="6" width="1" height="1" fill="#222"/><rect x="5.5" y="4.5" width="1" height="1" fill="#333"/><rect x="9.5" y="4.5" width="1" height="1" fill="#333"/></g></svg><div class="tl">uvs07100...</div></div>
<div class="abs th" style="left:777px;top:165px"><svg width="60" height="45" viewBox="0 0 60 45"><g filter="url(#tb)"><rect x="-5" y="-5" width="70" height="55" fill="#4c6e3c"/><ellipse cx="50" cy="6" rx="16" ry="12" fill="#d2ded2" opacity="0.85"/><ellipse cx="54" cy="18" rx="8" ry="8" fill="#7a9a68" opacity="0.7"/><ellipse cx="30" cy="0" rx="10" ry="4" fill="#cfdacc" opacity="0.7"/><polygon points="6,24 20,4 34,8 42,24 38,36 10,36" fill="#75685a"/><polygon points="8,24 40,24 37,36 10,36" fill="#3a3028"/><polygon points="14,10 24,5 30,10 22,18" fill="#9a8c7a" opacity="0.7"/><polygon points="-5,34 30,36 40,40 20,50 -5,50" fill="#385a30"/><polygon points="26,50 54,33 65,33 65,50" fill="#bcb49c"/><ellipse cx="56" cy="28" rx="10" ry="6" fill="#3f6236" opacity="0.8"/></g><g><rect x="0.5" y="0.5" width="15" height="9" fill="#f6ea3c" stroke="#000"/><rect x="2" y="4" width="3" height="2" fill="#000"/><rect x="11" y="4" width="3" height="2" fill="#000"/><rect x="7.5" y="2" width="1" height="1" fill="#000"/><rect x="7.5" y="7" width="1" height="1" fill="#000"/><rect x="6" y="3" width="1" height="1" fill="#222"/><rect x="9" y="3" width="1" height="1" fill="#222"/><rect x="6" y="6" width="1" height="1" fill="#222"/><rect x="9" y="6" width="1" height="1" fill="#222"/><rect x="5.5" y="4.5" width="1" height="1" fill="#333"/><rect x="9.5" y="4.5" width="1" height="1" fill="#333"/></g></svg><div class="tl">uvs07100...</div></div>
<div class="abs th" style="left:848px;top:165px"><svg width="60" height="45" viewBox="0 0 60 45"><g filter="url(#tb)"><rect x="-5" y="-5" width="70" height="55" fill="#48684e"/><rect x="-5" y="8" width="70" height="10" fill="#6a8a7a" opacity="0.7"/><rect x="-5" y="24" width="70" height="26" fill="#b6b6ac"/><rect x="-5" y="22" width="70" height="3" fill="#8a9488" opacity="0.8"/><rect x="18" y="-5" width="10" height="10" fill="#d4e4e4" opacity="0.8"/><polygon points="29,-5 35,-5 37,32 31,32" fill="#3a2c24"/><polygon points="46,-5 52,-5 53,30 47,30" fill="#4a3428"/><ellipse cx="38" cy="32" rx="10" ry="1.8" fill="#4a4a40" opacity="0.7"/><ellipse cx="52" cy="30" rx="8" ry="1.5" fill="#55554a" opacity="0.6"/><rect x="26" y="18" width="5.5" height="9" fill="#9a7a8c"/><ellipse cx="28.5" cy="16.5" rx="2" ry="2.2" fill="#2a2024"/><rect x="27" y="27" width="4" height="10" fill="#2a2a36"/></g><g><rect x="0.5" y="0.5" width="15" height="9" fill="#f6ea3c" stroke="#000"/><rect x="2" y="4" width="3" height="2" fill="#000"/><rect x="11" y="4" width="3" height="2" fill="#000"/><rect x="7.5" y="2" width="1" height="1" fill="#000"/><rect x="7.5" y="7" width="1" height="1" fill="#000"/><rect x="6" y="3" width="1" height="1" fill="#222"/><rect x="9" y="3" width="1" height="1" fill="#222"/><rect x="6" y="6" width="1" height="1" fill="#222"/><rect x="9" y="6" width="1" height="1" fill="#222"/><rect x="5.5" y="4.5" width="1" height="1" fill="#333"/><rect x="9.5" y="4.5" width="1" height="1" fill="#333"/></g></svg><div class="tl">uvs07100...</div></div>
<div class="abs th" style="left:919px;top:165px"><svg width="60" height="45" viewBox="0 0 60 45"><g filter="url(#tb)"><linearGradient id="g17" x1="0" y1="0" x2="1" y2="0.25"><stop offset="0" stop-color="#596977"/><stop offset="0.45" stop-color="#74848f"/><stop offset="1" stop-color="#8b99a7"/></linearGradient><rect x="-5" y="-5" width="70" height="55" fill="url(#g17)"/><ellipse cx="6" cy="44" rx="22" ry="12" fill="#9ca6ae" opacity="0.55"/></g><g><rect x="0.5" y="0.5" width="15" height="9" fill="#f6ea3c" stroke="#000"/><rect x="2" y="4" width="3" height="2" fill="#000"/><rect x="11" y="4" width="3" height="2" fill="#000"/><rect x="7.5" y="2" width="1" height="1" fill="#000"/><rect x="7.5" y="7" width="1" height="1" fill="#000"/><rect x="6" y="3" width="1" height="1" fill="#222"/><rect x="9" y="3" width="1" height="1" fill="#222"/><rect x="6" y="6" width="1" height="1" fill="#222"/><rect x="9" y="6" width="1" height="1" fill="#222"/><rect x="5.5" y="4.5" width="1" height="1" fill="#333"/><rect x="9.5" y="4.5" width="1" height="1" fill="#333"/></g></svg><div class="tl">uvs07100...</div></div>
<div class="abs th" style="left:990px;top:165px"><svg width="60" height="45" viewBox="0 0 60 45"><g filter="url(#tb)"><rect x="-5" y="-5" width="70" height="55" fill="#5a8a48"/><rect x="40" y="-5" width="25" height="40" fill="#7aa86a"/><ellipse cx="54" cy="4" rx="12" ry="8" fill="#b4ccac" opacity="0.7"/><polygon points="-5,10 12,12 22,24 24,40 -5,44" fill="#2f4a2c"/><rect x="-5" y="36" width="70" height="14" fill="#4c8c3c"/><rect x="-5" y="12" width="30" height="3" fill="#c8a848"/><rect x="10" y="12" width="3" height="38" fill="#c8a848"/><rect x="22" y="-5" width="3" height="19" fill="#c8a848"/><rect x="30" y="-5" width="2.5" height="17" fill="#b89a40" opacity="0.8"/><rect x="-5" y="-5" width="24" height="14" fill="#8aa878" opacity="0.7"/><rect x="22" y="14" width="17" height="8.5" fill="#e2503c"/><rect x="25" y="17" width="11" height="2.5" fill="#f4b0a0" opacity="0.8"/></g><g><rect x="0.5" y="0.5" width="15" height="9" fill="#f6ea3c" stroke="#000"/><rect x="2" y="4" width="3" height="2" fill="#000"/><rect x="11" y="4" width="3" height="2" fill="#000"/><rect x="7.5" y="2" width="1" height="1" fill="#000"/><rect x="7.5" y="7" width="1" height="1" fill="#000"/><rect x="6" y="3" width="1" height="1" fill="#222"/><rect x="9" y="3" width="1" height="1" fill="#222"/><rect x="6" y="6" width="1" height="1" fill="#222"/><rect x="9" y="6" width="1" height="1" fill="#222"/><rect x="5.5" y="4.5" width="1" height="1" fill="#333"/><rect x="9.5" y="4.5" width="1" height="1" fill="#333"/></g></svg><div class="tl">uvs07100...</div></div>
<div class="abs th" style="left:1061px;top:165px"><svg width="60" height="45" viewBox="0 0 60 45"><g filter="url(#tb)"><rect x="-5" y="-5" width="70" height="55" fill="#55655e"/><polygon points="12,-5 48,-5 44,6 34,12 24,10 16,14" fill="#eef2f2"/><ellipse cx="28" cy="20" rx="10" ry="10" fill="#75857e" opacity="0.7"/><polygon points="-5,4 14,8 20,26 -5,30" fill="#3a4a42"/><polygon points="40,4 50,-5 65,-5 65,28 44,28" fill="#36463e"/><polygon points="-5,27 65,22 65,32 -5,40" fill="#2e3a36"/><polygon points="-5,40 65,27 65,50 -5,50" fill="#b6c0c0"/><rect x="8.5" y="26" width="2" height="12" fill="#1e2826"/><polygon points="46,14 50,14 54,30 50,30" fill="#2a3430"/></g><g><rect x="0.5" y="0.5" width="15" height="9" fill="#f6ea3c" stroke="#000"/><rect x="2" y="4" width="3" height="2" fill="#000"/><rect x="11" y="4" width="3" height="2" fill="#000"/><rect x="7.5" y="2" width="1" height="1" fill="#000"/><rect x="7.5" y="7" width="1" height="1" fill="#000"/><rect x="6" y="3" width="1" height="1" fill="#222"/><rect x="9" y="3" width="1" height="1" fill="#222"/><rect x="6" y="6" width="1" height="1" fill="#222"/><rect x="9" y="6" width="1" height="1" fill="#222"/><rect x="5.5" y="4.5" width="1" height="1" fill="#333"/><rect x="9.5" y="4.5" width="1" height="1" fill="#333"/></g></svg><div class="tl">uvs07100...</div></div>
<div class="abs th" style="left:1132px;top:165px"><svg width="60" height="45" viewBox="0 0 60 45"><g filter="url(#tb)"><linearGradient id="g20" x1="0" y1="0" x2="0" y2="1"><stop offset="0" stop-color="#cedcee"/><stop offset="0.5" stop-color="#becee0"/><stop offset="0.52" stop-color="#8e9eae"/><stop offset="0.62" stop-color="#7a8a98"/><stop offset="0.64" stop-color="#3c4c4a"/><stop offset="1" stop-color="#34423e"/></linearGradient><rect x="-5" y="-5" width="70" height="55" fill="url(#g20)"/><polygon points="40,8 46,4 50,-5 65,-5 65,50 38,50 40,30 44,24 40,18" fill="#26343a"/><rect x="-5" y="22" width="7" height="12" fill="#2c3c3a"/><ellipse cx="24" cy="30" rx="6" ry="4" fill="#2a3836"/><rect x="30" y="26" width="5" height="10" fill="#2e3e44"/><ellipse cx="48" cy="40" rx="4" ry="3" fill="#8a9488" opacity="0.7"/><rect x="-5" y="34" width="44" height="3" fill="#5a6a68" opacity="0.6"/></g><g><rect x="0.5" y="0.5" width="15" height="9" fill="#f6ea3c" stroke="#000"/><rect x="2" y="4" width="3" height="2" fill="#000"/><rect x="11" y="4" width="3" height="2" fill="#000"/><rect x="7.5" y="2" width="1" height="1" fill="#000"/><rect x="7.5" y="7" width="1" height="1" fill="#000"/><rect x="6" y="3" width="1" height="1" fill="#222"/><rect x="9" y="3" width="1" height="1" fill="#222"/><rect x="6" y="6" width="1" height="1" fill="#222"/><rect x="9" y="6" width="1" height="1" fill="#222"/><rect x="5.5" y="4.5" width="1" height="1" fill="#333"/><rect x="9.5" y="4.5" width="1" height="1" fill="#333"/></g></svg><div class="tl">uvs07100...</div></div>

<div id="opt" class="abs"></div>
<div class="abs lbl" style="left:498px;top:287px">Duration:</div>
<div class="abs lbl" style="left:498px;top:314px">Source:</div>
<div class="abs lbl" style="left:498px;top:339px">Format:</div>
<div class="abs lbl" style="left:499px;top:364px">Capture folder:</div>
<div id="dur" class="abs"><span class="abs" style="left:10.5px;top:0;letter-spacing:.55px">0:00:00<span style="font-size:12.5px;letter-spacing:.1px">:00</span></span></div>
<svg class="abs" style="left:722px;top:286px" width="15" height="21"><rect x=".5" y=".5" width="14" height="20" fill="#e2e2e2" stroke="#f4f4f4"/><polygon points="3.5,9 11.5,9 7.5,3.5" fill="#1a1a1a"/><polygon points="3.5,12 11.5,12 7.5,17.5" fill="#1a1a1a"/></svg>
<div class="abs combo" style="left:632px;top:313px;width:163px">Sony DV Device</div>
<div class="abs cbtn" style="left:795px;top:313px"><svg width="18" height="17"><path d="M5,6 l4,4.5 4,-4.5" fill="none" stroke="#111" stroke-width="2.2"/></svg></div>
<div class="abs combo" style="left:632px;top:338px;width:351px">MPEG</div>
<div class="abs cbtn" style="left:983px;top:338px"><svg width="18" height="17"><path d="M5,6 l4,4.5 4,-4.5" fill="none" stroke="#111" stroke-width="2.2"/></svg></div>
<div class="abs combo" style="left:632px;top:363px;width:334px;height:22px;font-size:13px;line-height:21px;padding-left:3px">D:\</div>
<svg class="abs" style="left:977px;top:360px" width="28" height="24" viewBox="677 57 28 24"><path d="M681,61.5 q0,-2 2,-2 l6,0 q2,0 3,2 l1,1.5 l6,0 q1.5,0 1.5,1.5 l0,3 l-20.5,0 z" fill="#f2f4f8" stroke="#8090b0" stroke-width=".6"/>
<path d="M683.5,66 l18,0 q1,0 .8,1.2 l-2.6,11.3 q-.3,1 -1.5,1 l-16,0 q-1.300,0 -1.100,-1.300 l1.200,-11 q.2,-1.2 1.200,-1.200 z" fill="url(#fold1)" stroke="#2c3c66" stroke-width=".7"/>
<path d="M684,67 l17,0" stroke="#b8c6e2" stroke-width=".8"/></svg>
<div class="abs" style="left:633px;top:394px;width:15px;height:15px;box-sizing:border-box;border:1px solid #9a9a9a;border-radius:3px;background:linear-gradient(135deg,#c4c4c4,#ececec 70%,#f6f6f6);"></div>
<div class="abs lbl" style="left:650.5px;top:395px;letter-spacing:.2px">Split by scene</div>
<svg class="abs" style="left:816px;top:389px" width="30" height="30" viewBox="816 389 30 30">
<defs><radialGradient id="gearg" cx="0.38" cy="0.3" r="0.8"><stop offset="0" stop-color="#86a4e0"/><stop offset="0.35" stop-color="#4a6cb8"/><stop offset="0.75" stop-color="#2a4488"/><stop offset="1" stop-color="#182c66"/></radialGradient></defs>
<path d="M839.0,405.0 L841.4,405.9 L840.1,409.1 L837.8,408.1 L835.5,410.4 L836.5,412.7 L833.3,414.0 L832.4,411.6 L829.2,411.6 L828.3,414.0 L825.1,412.7 L826.1,410.4 L823.8,408.1 L821.5,409.1 L820.2,405.9 L822.6,405.0 L822.6,401.8 L820.2,400.9 L821.5,397.7 L823.8,398.7 L826.1,396.4 L825.1,394.1 L828.3,392.8 L829.2,395.2 L832.4,395.2 L833.3,392.8 L836.5,394.1 L835.5,396.4 L837.8,398.7 L840.1,397.7 L841.4,400.9 L839.0,401.8 Z" fill="url(#gearg)" stroke="url(#gearg)" stroke-width="2.8" stroke-linejoin="round"/>
<path d="M839.0,405.0 L841.4,405.9 L840.1,409.1 L837.8,408.1 L835.5,410.4 L836.5,412.7 L833.3,414.0 L832.4,411.6 L829.2,411.6 L828.3,414.0 L825.1,412.7 L826.1,410.4 L823.8,408.1 L821.5,409.1 L820.2,405.9 L822.6,405.0 L822.6,401.8 L820.2,400.9 L821.5,397.7 L823.8,398.7 L826.1,396.4 L825.1,394.1 L828.3,392.8 L829.2,395.2 L832.4,395.2 L833.3,392.8 L836.5,394.1 L835.5,396.4 L837.8,398.7 L840.1,397.7 L841.4,400.9 L839.0,401.8 Z" fill="none" stroke="#1a2c60" stroke-width=".6" stroke-linejoin="round" opacity=".5" transform="translate(0.4,0.6)"/>
<circle cx="831.6" cy="402.8" r="3.6" fill="#1c2e66"/><circle cx="832" cy="403.2" r="2.7" fill="#b8c4e4"/>
<path d="M823,399 q3,-5 9,-5" fill="none" stroke="#a8c0f0" stroke-width="1.6" opacity=".6"/>
</svg>

<div class="abs lbl" style="left:850px;top:396px">Options</div>
<div class="abs" style="left:498px;top:426px;width:503px;height:1px;background:#b9b9b9"></div>
<div class="abs" style="left:498px;top:427px;width:503px;height:1px;background:#eeeeee"></div>
<svg class="abs" style="left:499px;top:435px" width="32" height="28" viewBox="499 435 32 28">
<defs><linearGradient id="cvb" x1="0" y1="0" x2="0" y2="1"><stop offset="0" stop-color="#fafafa"/><stop offset="0.5" stop-color="#dcdcdc"/><stop offset="1" stop-color="#9a9a9a"/></linearGradient>
<linearGradient id="cvl" x1="0" y1="0" x2="1" y2="1"><stop offset="0" stop-color="#9ab0d8"/><stop offset="1" stop-color="#5a74a8"/></linearGradient>
<radialGradient id="cvr" cx="0.4" cy="0.35" r="0.7"><stop offset="0" stop-color="#ff6a5a"/><stop offset="0.5" stop-color="#e01818"/><stop offset="1" stop-color="#a80808"/></radialGradient></defs>
<path d="M520,441.5 l3.5,-3 q1.2,-.8 2.4,0 l1.4,1.2 q.8,1 0,2 l-3.6,3.4 z" fill="#7a7a7a" stroke="#4a4a4a" stroke-width=".7"/>
<path d="M503,444 q0,-1.5 1.5,-2 l14,-2.600 q3,-.4 4.500,1.600 l1.500,2.500 q.8,1.600 .8,3.500 l0,6.500 q0,2 -2,2 l-16,1.500 q-2.300,0 -3,-2 z" fill="url(#cvb)" stroke="#6a6a6a" stroke-width=".8"/>
<path d="M501.500,443.500 q-.6,-1.600 1.200,-2 l2.300,-.4 q1.200,0 1.600,1.400 l1.400,9.500 q.2,1.600 -1.200,1.800 l-1.800,.2 q-1.500,0 -1.900,-1.500 z" fill="#f4f4f4" stroke="#7a7a7a" stroke-width=".7"/>
<rect x="511" y="447" width="13.500" height="10.500" fill="url(#cvl)" stroke="#26282e" stroke-width="1.300"/>
<circle cx="522" cy="455.800" r="4.600" fill="url(#cvr)" stroke="#f4e4e4" stroke-width=".8"/>
</svg>
<svg class="abs" style="left:660px;top:437px" width="28" height="25" viewBox="660 437 28 25">
<defs><linearGradient id="cmb" x1="0" y1="0" x2="0" y2="1"><stop offset="0" stop-color="#8a9cc4"/><stop offset="0.3" stop-color="#566a9c"/><stop offset="1" stop-color="#2c3c68"/></linearGradient>
<radialGradient id="cml" cx="0.45" cy="0.4" r="0.6"><stop offset="0" stop-color="#e4e8f4"/><stop offset="0.55" stop-color="#b4bedc"/><stop offset="1" stop-color="#6a7aa8"/></radialGradient></defs>
<path d="M662,446 q0,-2.500 2.500,-2.800 l4,-.3 l3,-2.800 q1.500,-1 3.200,-1 q1.800,0 3.200,1 l3,2.800 l2.600,.3 q2,.3 2,2.800 l0,10.500 q0,2.300 -2.300,2.300 l-18.900,0 q-2.300,0 -2.300,-2.300 z" fill="url(#cmb)" stroke="#2a3860" stroke-width=".8"/>
<path d="M663.500,444.600 l5.500,-.6 3.200,-3 q2.400,-1.600 5,0 l3.200,3 4,.6 l0,1.600 l-21,0 z" fill="#e8ecf6" opacity=".92"/>
<rect x="664" y="442" width="3.600" height="1.600" fill="#3a3a4a"/>
<rect x="664" y="447" width="1.800" height="11" fill="#a9b8d8" opacity=".8"/>
<circle cx="675" cy="451.400" r="6" fill="#2f4070" stroke="#9aa8cc" stroke-width="1"/>
<circle cx="675" cy="451.400" r="3.900" fill="url(#cml)"/>
</svg>
<svg class="abs" style="left:820px;top:436px" width="30" height="28" viewBox="820 436 30 28" opacity=".85">
<path d="M823,444 l10,-2.500 5,-3 3,2 -3,4 0,8 -12,3 z" fill="#e9e9e9" stroke="#cdcdcd" stroke-width=".8"/>
<rect x="821.500" y="443" width="3" height="9" rx="1" fill="#f2f2f2" stroke="#cfcfcf" stroke-width=".6"/>
<rect x="839" y="439" width="4" height="3" fill="#c4d0c8" opacity=".8"/>
<path d="M830,444 l8,8 M838,444 l-8,8" stroke="#efaaa2" stroke-width="2.400" stroke-linecap="round"/>
<path d="M836,453 l4,0 6,-5 0,14 -6,-4 -4,0 z" fill="#cbd8ee" stroke="#b8c6e0" stroke-width=".8"/>
<rect x="833" y="454" width="3" height="5" fill="#b0c0e0"/>
</svg>

<div class="abs lbl" style="left:533px;top:442px;letter-spacing:.22px">Capture Video</div>
<div class="abs lbl" style="left:693.5px;top:442px;letter-spacing:.06px">Capture Image</div>
<div class="abs lbl" style="left:853px;top:442px;letter-spacing:.3px;color:#a6a6a6;text-shadow:1px 1px 0 #f8f8f8">Disable Audio Preview</div>

<div id="infot" class="abs">Information:</div>
<div id="infop" class="abs"></div>
<svg class="abs" style="left:0;top:550px" width="250" height="86" viewBox="0 550 250 86">
<defs><filter id="cb" x="-5%" y="-5%" width="110%" height="110%"><feGaussianBlur stdDeviation="0.5"/></filter>
<linearGradient id="cbody" x1="0" y1="1" x2="1" y2="0"><stop offset="0" stop-color="#a4a4a4"/><stop offset="0.45" stop-color="#949494"/><stop offset="1" stop-color="#808080"/></linearGradient>
</defs>
<g filter="url(#cb)">
<path d="M12,640 q2,-20 12,-28" fill="none" stroke="#ededed" stroke-width="1.200"/>
<polygon points="100,622 151.500,594 151.500,640 100,640" fill="#b2b2b2"/>
<polygon points="114,612 150,593 150,617 120,617" fill="#a4a4a4"/>
<ellipse cx="138" cy="570.500" rx="12.500" ry="11" fill="#8e8e8e"/>
<ellipse cx="146.500" cy="573" rx="5" ry="9.500" fill="#aeaeae" opacity=".75"/>
<polygon points="52,598 125,568.500 155,585 90,622 70,612" fill="url(#cbody)"/>
<polygon points="75,590 98,582.500 104.500,594 82,602" fill="#a9a9a9"/>
<polygon points="86.500,579.500 101,575 103.500,580.500 90,585" fill="#c6c6c6"/>
<polygon points="103,580 113,576.500 114,580 105,583.500" fill="#6e6e6e"/>
<polygon points="90.500,621 155.500,585.500 158,590 94,626.500" fill="#d8d8d8"/>
<polygon points="90.500,621 155.500,585.500 156.200,587 91.200,622.500" fill="#e8e8e8"/>
<polygon points="95,627 108,620 108,640 96,640" fill="#9c9c9c"/>
<ellipse cx="57" cy="641" rx="34" ry="43.500" fill="#dbdbdb"/>
<ellipse cx="58" cy="643" rx="27" ry="36" fill="#8f8f8f"/>
<ellipse cx="58.500" cy="644" rx="24" ry="32.500" fill="#d2d2d2"/>
<ellipse cx="59" cy="645" rx="21.500" ry="29.500" fill="#b2b2b2"/>
<ellipse cx="60" cy="648" rx="14" ry="20" fill="#a6a6a6"/>
<polygon points="120,616 240.500,619.500 240.500,640 120,640" fill="#ebebeb"/>
<polygon points="128.800,623.300 233,627 233,640 128.800,640" fill="#b3b3b3"/>
</g>
<text x="88" y="621" font-family="Liberation Serif, serif" font-weight="bold" font-style="italic" font-size="11" fill="#b0a868" transform="rotate(-28 88 621)">HD</text>
</svg>

<svg class="abs" style="left:275px;top:578px" width="26" height="52" viewBox="275 578 26 52">
<rect x="277.5" y="580.5" width="20" height="16" rx="1" fill="#f4f6fa" stroke="#66759a" stroke-width="1"/>
<rect x="281" y="583.6" width="13.4" height="9.6" fill="#2c3552"/><rect x="281" y="583.6" width="13.4" height="3" fill="#3c4668"/>
<g fill="#3a4260"><rect x="279.2" y="581.8" width="1" height="1"/><rect x="281.2" y="581.8" width="1" height="1"/><rect x="283.200" y="581.8" width="1" height="1"/><rect x="285.200" y="581.8" width="1" height="1"/><rect x="287.200" y="581.8" width="1" height="1"/><rect x="289.200" y="581.8" width="1" height="1"/><rect x="291.200" y="581.8" width="1" height="1"/><rect x="293.200" y="581.8" width="1" height="1"/><rect x="295.200" y="581.8" width="1" height="1"/>
<rect x="279.2" y="594.2" width="1" height="1"/><rect x="281.2" y="594.2" width="1" height="1"/><rect x="283.200" y="594.2" width="1" height="1"/><rect x="285.200" y="594.2" width="1" height="1"/><rect x="287.200" y="594.2" width="1" height="1"/><rect x="289.200" y="594.2" width="1" height="1"/><rect x="291.200" y="594.2" width="1" height="1"/><rect x="293.200" y="594.2" width="1" height="1"/><rect x="295.200" y="594.2" width="1" height="1"/></g>
<rect x="277.500" y="609.500" width="18" height="14" fill="#4a5678" stroke="#3a4466" stroke-width="1"/>
<rect x="281.500" y="612.8" width="12" height="7" fill="#aab8e0"/><rect x="278.300" y="613" width="2" height="6" fill="#c8d0e8"/>
<g fill="#e4e8f4"><rect x="279" y="610.600" width="1" height="1"/><rect x="281" y="610.600" width="1" height="1"/><rect x="283" y="610.600" width="1" height="1"/><rect x="285" y="610.600" width="1" height="1"/><rect x="287" y="610.600" width="1" height="1"/><rect x="289" y="610.600" width="1" height="1"/><rect x="291" y="610.600" width="1" height="1"/><rect x="293" y="610.600" width="1" height="1"/><rect x="279" y="621.400" width="1" height="1"/><rect x="281" y="621.400" width="1" height="1"/><rect x="283" y="621.400" width="1" height="1"/></g>
<circle cx="291.300" cy="621.800" r="6" fill="#262d48" stroke="#f0f2f8" stroke-width="1.200"/>
<rect x="290.400" y="620.600" width="1.900" height="4.600" fill="#fff"/><rect x="290.400" y="617.800" width="1.900" height="1.900" fill="#fff"/>
</svg>
<div class="abs it" style="left:302.5px;top:578.8px;font-size:13px;letter-spacing:-.07px">uvs080705-001.mpg</div>
<div class="abs it" style="left:302.5px;top:608.5px;font-size:13px;letter-spacing:-.23px">352x288,MPEG,Constant Bit ...</div>
<svg class="abs" style="left:774px;top:578px" width="28" height="52" viewBox="774 578 28 52">
<path d="M777.500,585.500 q0,-2 2,-2.400 l13,-2 q2,-.2 2.500,1.500 l0,3.500 l-8,1 l-1.500,8.500 l-4,.6 q-1.500,0 -1.800,-1.500 l-.7,-4 q-1.800,-.5 -1.800,-2.500 z" fill="#f4f4f6" stroke="#7a7f90" stroke-width=".8"/>
<rect x="794.800" y="580" width="3" height="7.500" fill="#2a3048"/>
<rect x="785.500" y="587.500" width="12" height="9" fill="#46527a" stroke="#2a3150" stroke-width="1"/>
<rect x="787" y="589" width="9" height="6" fill="#5a668e"/>
<path d="M779,587 l4,-.6" stroke="#9a9fb0" stroke-width="1"/>
<ellipse cx="780.600" cy="622.400" rx="4" ry="3" fill="#222840" transform="rotate(-20 780.600 622.400)"/>
<path d="M783.400,622 l0,-13.700 q1.200,-.6 2.200,0 q2.500,3.600 10.600,3.400 q-6,2.600 -10.600,.6 l0,9.700 z" fill="#222840"/>
<circle cx="791.300" cy="621.800" r="6" fill="#262d48" stroke="#f0f2f8" stroke-width="1.200"/>
<rect x="790.400" y="620.600" width="1.900" height="4.600" fill="#fff"/><rect x="790.400" y="617.800" width="1.900" height="1.900" fill="#fff"/>
</svg>
<div class="abs it" style="left:802.5px;top:578.8px;font-size:13px;letter-spacing:.28px">Sony DV Device</div>
<div class="abs it" style="left:802.5px;top:609px;font-size:13px;letter-spacing:-.1px">MPEG Audio - Layer 2,44100...</div>
<div id="wm" class="abs"></div>
<div class="abs" style="left:1068px;top:589px;width:66px;height:22px;transform-origin:0 0;transform:scale(1.55,1);font-family:'Liberation Sans','Noto Sans CJK SC',sans-serif;font-weight:900;font-size:15.8px;line-height:22px;color:#e6e6e6;white-space:nowrap;-webkit-text-stroke:.5px #e6e6e6">瑞星卡卡</div>
<div class="abs" style="left:1067.5px;top:607px;letter-spacing:.2px;font-style:italic;font-size:13.6px;line-height:17px;color:#e9e9e9;white-space:nowrap">www.ikaka.com</div>

</div>
</body>
</html>
